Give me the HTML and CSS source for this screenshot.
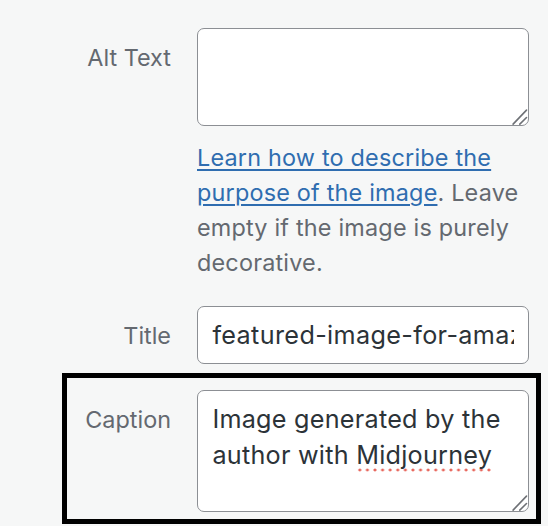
FILE: index.html
```html
<!DOCTYPE html>
<html>
<head>
<meta charset="utf-8">
<link rel="stylesheet" href="styles.css">
</head>
<body>
<div class="settings">
  <div class="row">
    <label class="label">Alt Text</label>
    <div class="field">
      <div class="textarea alt">
        <svg class="grip" width="20" height="20" viewBox="0 0 20 20"><path d="M5.1 19.1 L18.5 5.1 M11.8 19.1 L18.5 12.5" stroke="#6e7176" stroke-width="1.6" fill="none" stroke-linecap="round"/></svg>
      </div>
      <p class="desc"><a href="#">Learn how to describe the purpose of the image</a>. Leave empty if the image is purely decorative.</p>
    </div>
  </div>
  <div class="row title-row">
    <label class="label">Title</label>
    <div class="field">
      <div class="input"><span class="clip">featured-image-for-amazon-affiliate-marketing</span></div>
    </div>
  </div>
  <div class="row boxed">
    <label class="label">Caption</label>
    <div class="field">
      <div class="textarea caption">Image generated by the author with <span class="spell">Midjourney</span>
        <svg class="grip" width="20" height="20" viewBox="0 0 20 20"><path d="M5.1 19.1 L18.5 5.1 M11.8 19.1 L18.5 12.5" stroke="#6e7176" stroke-width="1.6" fill="none" stroke-linecap="round"/></svg>
      </div>
    </div>
  </div>
</div>
</body>
</html>
```
FILE: styles.css
```css
html, body {
  margin: 0;
  padding: 0;
  background: #f6f7f7;
}
body {
  font-family: Inter, "Liberation Sans", sans-serif;
  color: #646970;
}
.settings {
  padding-top: 28px;
  width: 548px;
}
.row {
  display: grid;
  grid-template-columns: 171px 332px;
  column-gap: 26px;
  align-items: start;
}
.label {
  text-align: right;
  font-size: 23.4px;
  line-height: 35px;
  padding-top: 12px;
  color: #646970;
}
.field {
  min-width: 0;
}
.textarea {
  position: relative;
  box-sizing: border-box;
  background: #fff;
  border: 1.8px solid #8c8f94;
  border-radius: 7px;
  font-size: 25.2px;
  line-height: 36px;
  letter-spacing: 0.25px;
  color: #2c3338;
  padding: 10px 14px 0 14.4px;
}
.alt {
  height: 98px;
}
.caption {
  height: 122px;
}
.grip {
  position: absolute;
  right: 0;
  bottom: 0;
}
.desc {
  margin: 14px 0 0 0;
  font-size: 23.4px;
  line-height: 35.1px;
  letter-spacing: 0.2px;
  color: #646970;
}
.desc a {
  color: #2f6db0;
  text-decoration: underline;
  text-decoration-thickness: 1.8px;
  text-underline-offset: 3px;
}
.title-row {
  margin-top: 26px;
}
.input {
  box-sizing: border-box;
  height: 58px;
  background: #fff;
  border: 1.8px solid #8c8f94;
  border-radius: 7px;
  padding: 0 14.4px;
  display: flex;
  align-items: center;
  font-size: 25.2px;
  letter-spacing: 0.35px;
  color: #2c3338;
}
.clip {
  display: block;
  overflow: hidden;
  white-space: nowrap;
  width: 100%;
  line-height: 36px;
}
.boxed {
  margin: 9px 7px 0 62px;
  border: 5px solid #000;
  padding: 12px 7px 7px 0;
  grid-template-columns: 104px 332px;
}
.spell {
  background-image: radial-gradient(circle, #e8675d 1.3px, transparent 1.7px);
  background-size: 7.6px 4px;
  background-repeat: repeat-x;
  background-position: 0 100%;
  padding-bottom: 2px;
}
```
